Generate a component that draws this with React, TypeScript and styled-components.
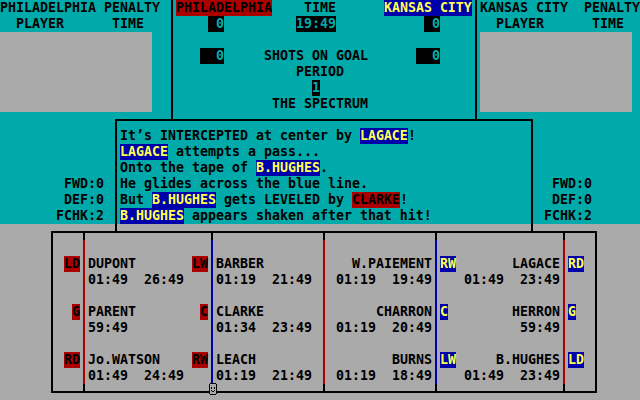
import React from 'react';
import styled, { createGlobalStyle } from 'styled-components';

const CYAN = '#00aaaa';
const GRAY = '#aaaaaa';
const RED = '#aa0000';
const BLUE = '#0000aa';
const YELLOW = '#ffff55';

const GlobalStyle = createGlobalStyle`
  html, body {
    margin: 0;
    padding: 0;
    background: ${GRAY};
  }
`;

const Screen = styled.div`
  width: 640px;
  height: 400px;
  overflow: hidden;
  display: flex;
  flex-direction: column;
  background: linear-gradient(to bottom, ${CYAN} 0, ${CYAN} 224px, ${GRAY} 224px);
  font-family: 'DejaVu Sans Mono', 'Liberation Mono', monospace;
  font-weight: bold;
  font-size: 13.29px;
  line-height: 16px;
  color: #000;
  white-space: pre;
`;

const Line = styled.div`
  height: 16px;
`;

const Hl = styled.span<{ $tone: 'home' | 'away' | 'lcd' }>`
  display: inline-block;
  height: 16px;
  vertical-align: top;
  background: ${p => (p.$tone === 'home' ? RED : p.$tone === 'away' ? BLUE : '#000')};
  color: ${p => (p.$tone === 'home' ? '#000' : p.$tone === 'away' ? YELLOW : CYAN)};
`;

/* ---- top: penalty boxes and scoreboard ---- */

const Header = styled.header`
  display: flex;
  height: 119px;
  flex-shrink: 0;
`;

const PenaltyPanel = styled.div<{ $side: 'left' | 'right' }>`
  display: flex;
  flex-direction: column;
  width: ${p => (p.$side === 'left' ? '171px' : 'auto')};
  flex: ${p => (p.$side === 'left' ? 'none' : '1')};
  padding-left: ${p => (p.$side === 'left' ? '0' : '3px')};
`;

const PenaltyList = styled.div`
  width: 152px;
  height: 80px;
  background: ${GRAY};
`;

const Scoreboard = styled.div`
  width: 306px;
  box-sizing: border-box;
  border-left: 2px solid #000;
  border-right: 2px solid #000;
  padding-left: 3px;
`;

/* ---- middle: play-by-play box ---- */

const Middle = styled.div`
  display: flex;
  height: 112px;
  flex-shrink: 0;
`;

const Stats = styled.div<{ $width?: number; $pad: number }>`
  display: flex;
  flex-direction: column;
  justify-content: flex-end;
  align-items: flex-end;
  ${p => (p.$width ? `width: ${p.$width}px;` : 'flex: 1;')}
  box-sizing: border-box;
  padding: 0 ${p => p.$pad}px 7px 0;
`;

const MessageBox = styled.div`
  width: 418px;
  box-sizing: border-box;
  border: 2px solid #000;
  border-bottom: none;
  padding: 7px 0 0 3px;
`;

/* ---- bottom: the lines on the ice ---- */

const Rink = styled.div`
  position: relative;
  margin-left: 51px;
  width: 546px;
  height: 162px;
  flex-shrink: 0;
  box-sizing: border-box;
  border: 2px solid #000;
  display: flex;
`;

const Zone = styled.div<{ $w: number; $align: 'left' | 'right' }>`
  width: ${p => p.$w}px;
  box-sizing: border-box;
  padding: 23px 3px 0;
  display: flex;
  flex-direction: column;
  gap: 16px;
  text-align: ${p => p.$align};
`;

const Entry = styled.div`
  height: 32px;
  display: flex;
  flex-direction: column;
`;

const NameRow = styled.div<{ $justify: string }>`
  height: 16px;
  display: flex;
  justify-content: ${p => p.$justify};
`;

const Divider = styled.div<{ $color: string }>`
  width: 2px;
  flex-shrink: 0;
  background: linear-gradient(
    to bottom,
    #000 0,
    #000 7px,
    ${p => p.$color} 7px,
    ${p => p.$color} calc(100% - 7px),
    #000 calc(100% - 7px)
  );
`;

const PuckMark = styled.svg`
  position: absolute;
  left: 156px;
  top: 150px;
`;

type Player = { pos: string; name: string; times: string };

const homeD: Player[] = [
  { pos: 'LD', name: 'DUPONT', times: '01:49  26:49' },
  { pos: 'G', name: 'PARENT', times: '59:49' },
  { pos: 'RD', name: 'Jo.WATSON', times: '01:49  24:49' },
];
const homeF: Player[] = [
  { pos: 'LW', name: 'BARBER', times: '01:19  21:49' },
  { pos: 'C', name: 'CLARKE', times: '01:34  23:49' },
  { pos: 'RW', name: 'LEACH', times: '01:19  21:49' },
];
const awayF: Player[] = [
  { pos: 'RW', name: 'W.PAIEMENT', times: '01:19  19:49' },
  { pos: 'C', name: 'CHARRON', times: '01:19  20:49' },
  { pos: 'LW', name: 'BURNS', times: '01:19  18:49' },
];
const awayD: Player[] = [
  { pos: 'RD', name: 'LAGACE', times: '01:49  23:49' },
  { pos: 'G', name: 'HERRON', times: '59:49' },
  { pos: 'LD', name: 'B.HUGHES', times: '01:49  23:49' },
];

const Puck = () => (
  <PuckMark width="8" height="12" viewBox="0 0 8 12" shapeRendering="crispEdges">
    <rect x="1" y="1" width="6" height="10" fill={GRAY} />
    <rect x="1" y="0" width="6" height="1" fill="#000" />
    <rect x="1" y="11" width="6" height="1" fill="#000" />
    <rect x="0" y="1" width="1" height="10" fill="#000" />
    <rect x="7" y="1" width="1" height="10" fill="#000" />
    <rect x="2" y="4" width="1" height="2" fill="#000" />
    <rect x="5" y="4" width="1" height="2" fill="#000" />
    <rect x="2" y="7" width="1" height="1" fill="#000" />
    <rect x="5" y="7" width="1" height="1" fill="#000" />
    <rect x="3" y="8" width="2" height="1" fill="#000" />
  </PuckMark>
);

const App: React.FC = () => {
  const h = (name: string) => <Hl $tone="home">{name}</Hl>;
  const a = (name: string) => <Hl $tone="away">{name}</Hl>;

  return (
    <>
      <GlobalStyle />
      <Screen>
        <Header>
          <PenaltyPanel $side="left">
            <Line>PHILADELPHIA PENALTY</Line>
            <Line>{'  PLAYER      TIME'}</Line>
            <PenaltyList />
          </PenaltyPanel>

          <Scoreboard>
            <Line>
              {h('PHILADELPHIA')}
              {'    TIME      '}
              {a('KANSAS CITY')}
            </Line>
            <Line>
              {'    '}
              <Hl $tone="lcd">{' 0'}</Hl>
              {'         '}
              <Hl $tone="lcd">19:49</Hl>
              {'           '}
              <Hl $tone="lcd">{' 0'}</Hl>
            </Line>
            <Line />
            <Line>
              {'   '}
              <Hl $tone="lcd">{'  0'}</Hl>
              {'     SHOTS ON GOAL      '}
              <Hl $tone="lcd">{'  0'}</Hl>
            </Line>
            <Line>{'               PERIOD'}</Line>
            <Line>
              {'                 '}
              <Hl $tone="lcd">1</Hl>
            </Line>
            <Line>{'            THE SPECTRUM'}</Line>
          </Scoreboard>

          <PenaltyPanel $side="right">
            <Line>KANSAS CITY  PENALTY</Line>
            <Line>{'  PLAYER      TIME'}</Line>
            <PenaltyList />
          </PenaltyPanel>
        </Header>

        <Middle>
          <Stats $width={115} $pad={11}>
            <Line>FWD:0</Line>
            <Line>DEF:0</Line>
            <Line>FCHK:2</Line>
          </Stats>

          <MessageBox>
            <Line>It’s INTERCEPTED at center by {a('LAGACE')}!</Line>
            <Line>{a('LAGACE')} attempts a pass...</Line>
            <Line>Onto the tape of {a('B.HUGHES')}.</Line>
            <Line>He glides across the blue line.</Line>
            <Line>
              But {a('B.HUGHES')} gets LEVELED by {h('CLARKE')}!
            </Line>
            <Line>{a('B.HUGHES')} appears shaken after that hit!</Line>
          </MessageBox>

          <Stats $pad={48}>
            <Line>FWD:0</Line>
            <Line>DEF:0</Line>
            <Line>FCHK:2</Line>
          </Stats>
        </Middle>

        <Rink>
          <Zone $w={30} $align="right">
            {homeD.map(p => (
              <Entry key={p.pos}>
                <Line>{h(p.pos)}</Line>
              </Entry>
            ))}
          </Zone>
          <Divider $color={RED} />
          <Zone $w={126} $align="left">
            {homeD.map((p, i) => (
              <Entry key={p.name}>
                <NameRow $justify="space-between">
                  <span>{p.name}</span>
                  {h(homeF[i].pos)}
                </NameRow>
                <Line>{p.times}</Line>
              </Entry>
            ))}
          </Zone>
          <Divider $color={BLUE} />
          <Zone $w={110} $align="left">
            {homeF.map(p => (
              <Entry key={p.name}>
                <Line>{p.name}</Line>
                <Line>{p.times}</Line>
              </Entry>
            ))}
          </Zone>
          <Divider $color={RED} />
          <Zone $w={110} $align="right">
            {awayF.map(p => (
              <Entry key={p.name}>
                <Line>{p.name}</Line>
                <Line>{p.times}</Line>
              </Entry>
            ))}
          </Zone>
          <Divider $color={BLUE} />
          <Zone $w={126} $align="right">
            {awayD.map((p, i) => (
              <Entry key={p.name}>
                <NameRow $justify="space-between">
                  {a(awayF[i].pos)}
                  <span>{p.name}</span>
                </NameRow>
                <Line>{p.times}</Line>
              </Entry>
            ))}
          </Zone>
          <Divider $color={RED} />
          <Zone $w={30} $align="left">
            {awayD.map(p => (
              <Entry key={p.pos}>
                <Line>{a(p.pos)}</Line>
              </Entry>
            ))}
          </Zone>
          <Puck />
        </Rink>
      </Screen>
    </>
  );
};

export default App;
